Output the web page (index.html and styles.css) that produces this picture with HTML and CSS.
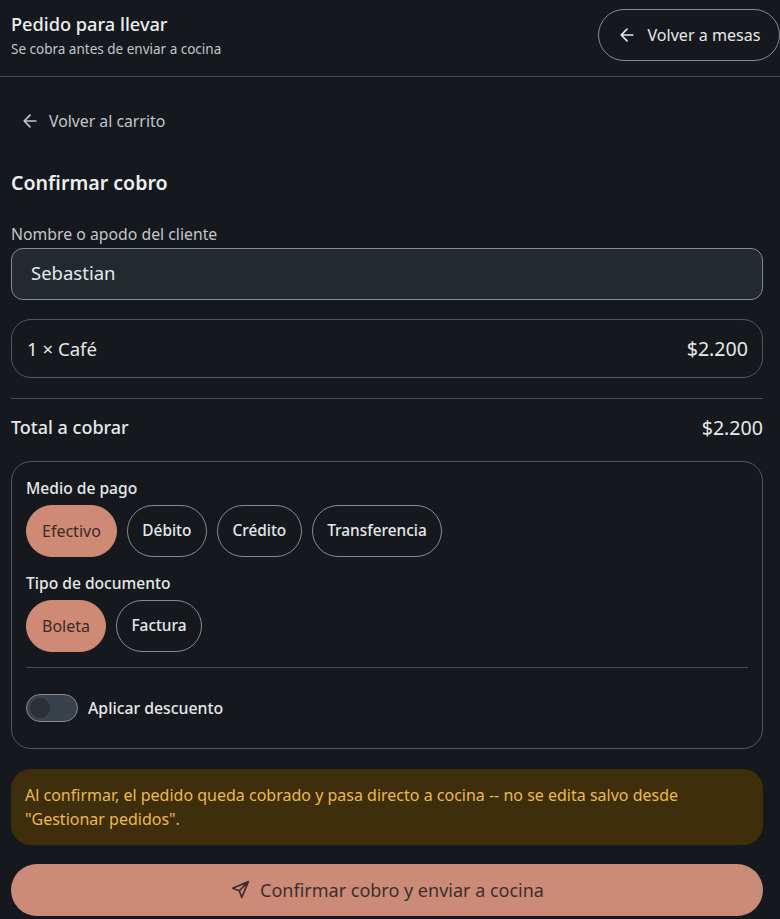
FILE: index.html
```html
<!DOCTYPE html>
<html lang="es">
<head>
<meta charset="utf-8">
<title>Confirmar cobro</title>
<link rel="stylesheet" href="styles.css">
</head>
<body>
<header class="topbar">
  <div class="topbar-text">
    <div class="topbar-title">Pedido para llevar</div>
    <div class="topbar-sub">Se cobra antes de enviar a cocina</div>
  </div>
  <button class="btn-outline">
    <svg class="icon" viewBox="0 0 24 24"><path d="M19 12H5M12 19l-7-7 7-7"/></svg>
    <span>Volver a mesas</span>
  </button>
</header>
<main class="content">
  <a class="back-link">
    <svg class="icon" viewBox="0 0 24 24"><path d="M19 12H5M12 19l-7-7 7-7"/></svg>
    <span>Volver al carrito</span>
  </a>
  <h1 class="title">Confirmar cobro</h1>
  <label class="field-label">Nombre o apodo del cliente</label>
  <div class="input">Sebastian</div>
  <div class="item-card"><span>1 × Café</span><span class="amount">$2.200</span></div>
  <div class="total-row"><span class="total-label">Total a cobrar</span><span class="amount">$2.200</span></div>
  <section class="pay-card">
    <div class="group-label">Medio de pago</div>
    <div class="chips">
      <span class="chip active">Efectivo</span>
      <span class="chip">Débito</span>
      <span class="chip">Crédito</span>
      <span class="chip">Transferencia</span>
    </div>
    <div class="group-label second">Tipo de documento</div>
    <div class="chips">
      <span class="chip active">Boleta</span>
      <span class="chip">Factura</span>
    </div>
    <div class="card-divider"></div>
    <div class="switch-row">
      <span class="switch"><span class="knob"></span></span>
      <span>Aplicar descuento</span>
    </div>
  </section>
  <div class="alert">Al confirmar, el pedido queda cobrado y pasa directo a cocina -- no se edita salvo desde "Gestionar pedidos".</div>
  <button class="btn-primary">
    <svg class="send" viewBox="0 0 24 24"><path d="M21 3 3 10.5l7.5 3L13.5 21 21 3zM10.5 13.5 21 3"/></svg>
    <span>Confirmar cobro y enviar a cocina</span>
  </button>
</main>
</body>
</html>
```
FILE: styles.css
```css
* { box-sizing: border-box; }
html, body { margin: 0; height: 919px; overflow: hidden; }
body {
  background: #15191d;
  color: #e6e8ea;
  font-family: "Noto Sans", "Open Sans", sans-serif;
  font-size: 17px;
}
.topbar {
  height: 77px;
  padding: 9px 0 15px 11px;
  display: flex;
  justify-content: space-between;
  align-items: center;
  border-bottom: 1px solid #474d53;
}
.topbar-title { font-size: 18.2px; font-weight: 500; line-height: 26px; color: #eceef0; }
.topbar-sub { margin-top: 2px; font-size: 13.5px; line-height: 20px; color: #c1c6cb; }
.btn-outline {
  width: 182px;
  height: 52px;
  border: 1px solid #858b91;
  border-radius: 26px;
  background: transparent;
  color: #e6e8ea;
  font: inherit;
  font-size: 16.1px;
  display: flex;
  align-items: center;
  justify-content: center;
  gap: 10px;
  padding: 0;
}
.icon { width: 20px; height: 20px; fill: none; stroke: currentColor; stroke-width: 2; stroke-linecap: round; stroke-linejoin: round; flex: none; }
.content { padding: 0 17px 0 11px; }
.back-link {
  display: flex;
  align-items: center;
  gap: 9.5px;
  height: 52px;
  margin-top: 18px;
  padding-left: 8.5px;
  color: #c1c6cb;
  font-size: 15.8px;
}
.title { margin: 22px 0 0; font-size: 19.6px; font-weight: 600; line-height: 28px; color: #eceef0; }
.field-label { display: block; margin-top: 25px; font-size: 15.8px; line-height: 24px; color: #c1c6cb; }
.input {
  height: 52px;
  margin-top: 2px;
  padding: 0 0 3px 19px;
  display: flex;
  align-items: center;
  background: #22292f;
  border: 1px solid #858b91;
  border-radius: 12px;
  font-size: 18.5px;
}
.item-card {
  height: 59px;
  margin-top: 19px;
  padding: 0 14px 1px 15px;
  display: flex;
  align-items: center;
  justify-content: space-between;
  border: 1px solid #50575d;
  border-radius: 20px;
  font-size: 18.6px;
}
.total-row {
  height: 57px;
  margin-top: 20px;
  display: flex;
  align-items: center;
  justify-content: space-between;
  border-top: 1px solid #474d53;
  font-size: 18px;
  font-weight: 500;
}
.amount { font-size: 19.6px; font-weight: 400; }
.pay-card {
  height: 288px;
  margin-top: 6px;
  padding: 14px 14px 0;
  border: 1px solid #50575d;
  border-radius: 20px;
}
.group-label { font-size: 15.6px; font-weight: 500; line-height: 24px; }
.group-label.second { margin-top: 14px; }
.chips { display: flex; gap: 10px; margin-top: 5px; }
.chip {
  height: 52px;
  padding: 0 14.5px 1px;
  display: flex;
  align-items: center;
  border: 1px solid #858b91;
  border-radius: 26px;
  font-size: 15.4px;
  font-weight: 500;
}
.chip.active { background: #cf8a75; border-color: #cf8a75; color: #3b2b28; font-weight: 400; font-size: 16px; padding: 0 15px 1px; }
.card-divider { height: 1px; margin-top: 15px; background: #474d53; }
.switch-row { display: flex; align-items: center; gap: 10px; margin-top: 26px; font-size: 15.8px; font-weight: 500; }
.switch {
  width: 52px;
  height: 28px;
  padding: 3px;
  display: flex;
  background: #39424a;
  border: 1px solid #858b91;
  border-radius: 14px;
}
.knob { width: 20px; height: 20px; border-radius: 50%; background: #2a3036; }
.alert {
  height: 76px;
  margin-top: 20px;
  padding: 14px;
  background: #3f2e0b;
  border-radius: 20px;
  color: #ebb94f;
  font-size: 16px;
  line-height: 24px;
}
.btn-primary {
  width: 100%;
  height: 52px;
  margin-top: 19px;
  padding: 0 0 1px;
  display: flex;
  align-items: center;
  justify-content: center;
  gap: 9px;
  background: #cc8b78;
  border: 0;
  border-radius: 26px;
  color: #3b2f2d;
  font: inherit;
  font-size: 18px;
}
.send { width: 21px; height: 21px; fill: none; stroke: currentColor; stroke-width: 1.9; stroke-linecap: round; stroke-linejoin: round; }
```
